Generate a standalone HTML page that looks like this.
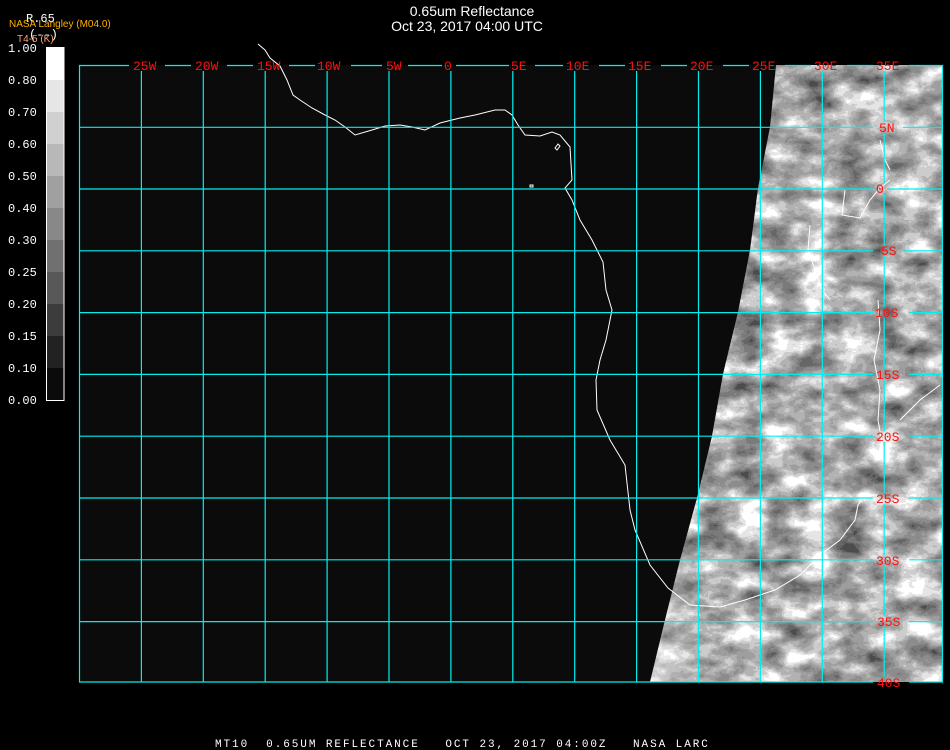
<!DOCTYPE html>
<html><head><meta charset="utf-8">
<style>
html,body{margin:0;padding:0;background:#000;width:950px;height:750px;overflow:hidden}
svg{display:block}
.t{font-family:"Liberation Sans",sans-serif;fill:#fff}
.m{font-family:"Liberation Mono",monospace}
</style></head><body>
<svg width="950" height="750" viewBox="0 0 950 750" xmlns="http://www.w3.org/2000/svg">
<defs>
<filter id="clouds" x="0" y="0" width="100%" height="100%" color-interpolation-filters="sRGB">
<feTurbulence type="fractalNoise" baseFrequency="0.03 0.045" numOctaves="5" seed="11" result="n"/>
<feColorMatrix in="n" type="matrix" values="1.5 0 0 0 -0.18  1.5 0 0 0 -0.18  1.5 0 0 0 -0.18  0 0 0 0 1" result="g"/>
<feComponentTransfer in="g"><feFuncR type="discrete" tableValues="0.3 0.4 0.48 0.55 0.62 0.7 0.8 0.9 1"/><feFuncG type="discrete" tableValues="0.3 0.4 0.48 0.55 0.62 0.7 0.8 0.9 1"/><feFuncB type="discrete" tableValues="0.3 0.4 0.48 0.55 0.62 0.7 0.8 0.9 1"/></feComponentTransfer>
</filter>
<linearGradient id="edge" x1="0" x2="1" y1="0" y2="0">
<stop offset="0" stop-color="#fff" stop-opacity="0.45"/><stop offset="0.2" stop-color="#fff" stop-opacity="0"/>
</linearGradient>
<clipPath id="img"><path d="M776,65 L770,127 L758,188 L750,250 L738,312 L723,374 L712,436 L697,498 L680,560 L665,620 L650,682 L943,682 L943,65 Z"/></clipPath>
<mask id="gm" maskUnits="userSpaceOnUse" x="0" y="0" width="950" height="750">
<rect x="0" y="0" width="950" height="750" fill="#fff"/>
<g fill="#000">
<rect x="129" y="60" width="36" height="11"/><rect x="191" y="60" width="36" height="11"/><rect x="253" y="60" width="36" height="11"/><rect x="315" y="60" width="36" height="11"/><rect x="382" y="60" width="26" height="11"/><rect x="442" y="60" width="14" height="11"/><rect x="509" y="60" width="26" height="11"/><rect x="563" y="60" width="36" height="11"/><rect x="625" y="60" width="36" height="11"/><rect x="687" y="60" width="36" height="11"/><rect x="749" y="60" width="36" height="11"/><rect x="811" y="60" width="36" height="11"/><rect x="873" y="60" width="36" height="11"/>
<rect x="873" y="122" width="30" height="11"/><rect x="873" y="183" width="14" height="11"/><rect x="873" y="245" width="30" height="11"/><rect x="873" y="307" width="36" height="11"/><rect x="873" y="369" width="36" height="11"/><rect x="873" y="431" width="36" height="11"/><rect x="873" y="493" width="36" height="11"/><rect x="873" y="555" width="36" height="11"/><rect x="873" y="616" width="36" height="11"/><rect x="873" y="677" width="36" height="11"/>
</g>
</mask>
</defs>
<rect x="79" y="65" width="864" height="617" fill="#0b0b0b"/>
<g clip-path="url(#img)">
<rect x="640" y="65" width="303" height="617" filter="url(#clouds)"/>
<rect x="640" y="65" width="303" height="617" fill="url(#edge)"/>
</g>
<g fill="none" stroke="#fff" stroke-width="1">
<path d="M258,44 L265,50 L270,58 L280,66 L287,80 L293,95 L300,100 L312,108 L325,115 L335,120 L345,127 L355,135 L372,130 L385,126 L400,125 L412,127 L425,130 L440,123 L460,118 L475,115 L495,110 L505,110 L512,115 L518,125 L525,135 L540,136 L552,132 L560,135 L570,147 L572,180 L565,188 L572,200 L580,220 L592,240 L603,262 L606,290 L612,310 L606,340 L600,360 L596,380 L597,410 L610,440 L625,465 L630,510 L635,530 L650,565 L668,588 L690,605 L720,607 L745,600 L775,590 L800,575 L820,555 L840,540 L855,520 L858,505 L865,495 L880,495"/>
<path d="M555,148 l3,-4 l2,2 l-3,4 z"/>
<path d="M530,185 l3,0 l0,2 l-3,0 z"/>
<path d="M810,225 L808,250 L815,270 L822,290 L830,300"/>
<path d="M878,300 L880,330 L874,360 L880,390 L878,420 L885,460"/>
<path d="M845,190 L842,215 L860,218 L870,200 L880,188 L890,180"/>
<path d="M880,140 L885,160 L890,170"/>
<path d="M900,420 L920,400 L940,385"/>
</g>
<g stroke="#00f0f0" stroke-width="1.2" fill="none" mask="url(#gm)">
<path d="M79.5,65V682 M141.4,65V682 M203.3,65V682 M265.2,65V682 M327.1,65V682 M389,65V682 M450.9,65V682 M512.8,65V682 M574.7,65V682 M636.6,65V682 M698.5,65V682 M760.4,65V682 M822.3,65V682 M884.2,65V682 M942.5,65V682"/>
<path d="M79,65.5H943 M79,127.3H943 M79,189H943 M79,250.8H943 M79,312.6H943 M79,374.4H943 M79,436.2H943 M79,498H943 M79,559.8H943 M79,621.6H943 M79,682H943"/>
</g>
<g class="m" font-size="13" fill="#ff1010">
<text x="133" y="70">25W</text><text x="195" y="70">20W</text><text x="257" y="70">15W</text><text x="317" y="70">10W</text><text x="386" y="70">5W</text><text x="444" y="70">0</text><text x="511" y="70">5E</text><text x="566" y="70">10E</text><text x="628" y="70">15E</text><text x="690" y="70">20E</text><text x="752" y="70">25E</text><text x="814" y="70">30E</text><text x="876" y="70">35E</text>
<text x="879" y="132">5N</text><text x="876" y="193">0</text><text x="881" y="255">5S</text><text x="875" y="317">10S</text><text x="876" y="379">15S</text><text x="876" y="441">20S</text><text x="876" y="503">25S</text><text x="876" y="565">30S</text><text x="877" y="626">35S</text><text x="877" y="687">40S</text>
</g>
<g>
<rect x="46" y="47" width="18" height="33" fill="#fff"/>
<rect x="46" y="80" width="18" height="32" fill="#e6e6e6"/>
<rect x="46" y="112" width="18" height="32" fill="#d0d0d0"/>
<rect x="46" y="144" width="18" height="32" fill="#b8b8b8"/>
<rect x="46" y="176" width="18" height="32" fill="#a0a0a0"/>
<rect x="46" y="208" width="18" height="32" fill="#888"/>
<rect x="46" y="240" width="18" height="32" fill="#707070"/>
<rect x="46" y="272" width="18" height="32" fill="#585858"/>
<rect x="46" y="304" width="18" height="32" fill="#3c3c3c"/>
<rect x="46" y="336" width="18" height="32" fill="#222"/>
<rect x="46" y="368" width="18" height="32" fill="#0b0b0b"/>
<rect x="46.5" y="47.5" width="17.5" height="353" fill="none" stroke="#fff" stroke-width="1"/>
</g>
<g class="m" font-size="12" fill="#fff">
<text x="8" y="52">1.00</text><text x="8" y="84">0.80</text><text x="8" y="116">0.70</text><text x="8" y="148">0.60</text><text x="8" y="180">0.50</text><text x="8" y="212">0.40</text><text x="8" y="244">0.30</text><text x="8" y="276">0.25</text><text x="8" y="308">0.20</text><text x="8" y="340">0.15</text><text x="8" y="372">0.10</text><text x="8" y="404">0.00</text>
<text x="26" y="22">R.65</text><text x="29" y="38">(--)</text>
</g>
<text x="9" y="27" font-family="Liberation Sans,sans-serif" font-size="10" fill="#ffb000">NASA Langley (M04.0)</text>
<text x="17" y="42" font-family="Liberation Sans,sans-serif" font-size="10" fill="#ffa070">T4-5 (K)</text>
<text class="t" x="472" y="16" font-size="14" text-anchor="middle">0.65um Reflectance</text>
<text class="t" x="467" y="31" font-size="14" text-anchor="middle">Oct 23, 2017 04:00 UTC</text>
<text class="m" x="215" y="747" font-size="11" fill="#fff" letter-spacing="1.93" xml:space="preserve">MT10  0.65UM REFLECTANCE   OCT 23, 2017 04:00Z   NASA LARC</text>
</svg>
</body></html>
